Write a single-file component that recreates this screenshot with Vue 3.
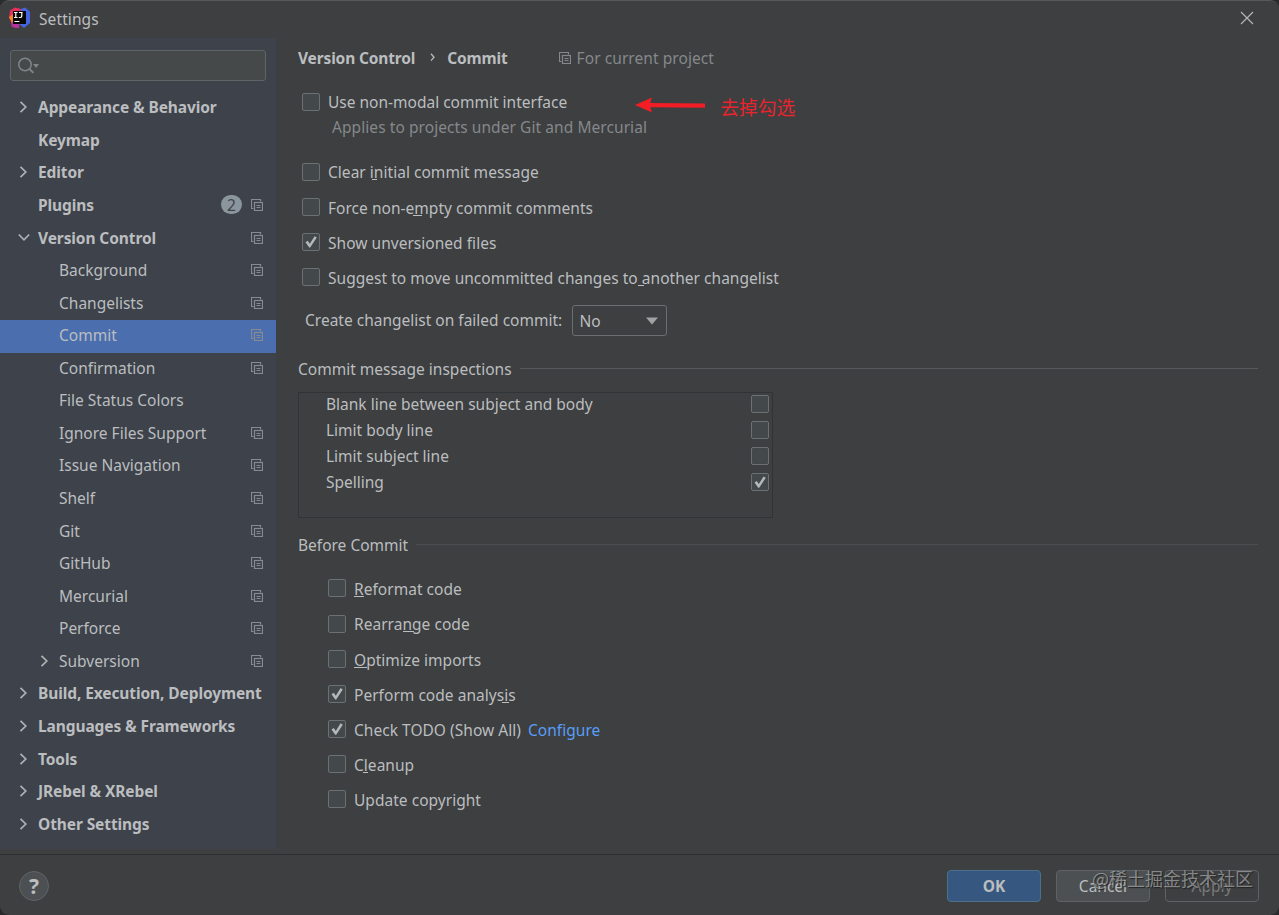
<script setup>
    import { ref } from 'vue';

    const tree = [
        { name: 'Appearance & Behavior', arrow: 'right', bold: true },
        { name: 'Keymap', bold: true },
        { name: 'Editor', arrow: 'right', bold: true },
        { name: 'Plugins', bold: true, badge: 2, project: true },
        { name: 'Version Control', arrow: 'down', bold: true, project: true },
        { name: 'Background', project: true },
        { name: 'Changelists', project: true },
        { name: 'Commit', project: true },
        { name: 'Confirmation', project: true },
        { name: 'File Status Colors' },
        { name: 'Ignore Files Support', project: true },
        { name: 'Issue Navigation', project: true },
        { name: 'Shelf', project: true },
        { name: 'Git', project: true },
        { name: 'GitHub', project: true },
        { name: 'Mercurial', project: true },
        { name: 'Perforce', project: true },
        { name: 'Subversion', arrow: 'right', project: true },
        { name: 'Build, Execution, Deployment', arrow: 'right', bold: true },
        { name: 'Languages & Frameworks', arrow: 'right', bold: true },
        { name: 'Tools', arrow: 'right', bold: true },
        { name: 'JRebel & XRebel', arrow: 'right', bold: true },
        { name: 'Other Settings', arrow: 'right', bold: true },
    ];
    const selected = ref('Commit');

    // mnemonic: [offset from the label start, width] of the underline
    const options = ref([
        { name: 'Clear initial commit message', checked: false, mnemonic: [44, 5] },
        { name: 'Force non-empty commit comments', checked: false, mnemonic: [85, 9] },
        { name: 'Show unversioned files', checked: true },
        { name: 'Suggest to move uncommitted changes to another changelist', checked: false, mnemonic: [310, 6] },
    ]);
    const inspections = ref([
        { name: 'Blank line between subject and body', checked: false },
        { name: 'Limit body line', checked: false },
        { name: 'Limit subject line', checked: false },
        { name: 'Spelling', checked: true },
    ]);
    const beforeCommit = ref([
        { name: 'Reformat code', checked: false, mnemonic: [0, 10] },
        { name: 'Rearrange code', checked: false, mnemonic: [49, 11] },
        { name: 'Optimize imports', checked: false, mnemonic: [0, 13] },
        { name: 'Perform code analysis', checked: true, mnemonic: [148, 7] },
        { name: 'Check TODO (Show All)', checked: true, link: 'Configure' },
        { name: 'Cleanup', checked: false, mnemonic: [9, 5] },
        { name: 'Update copyright', checked: false },
    ]);
    const nonModal = ref(false);

    function underline(mnemonic) {
        return { left: mnemonic[0] + 'px', width: mnemonic[1] + 'px' };
    }
</script>

<template>
    <div class='window'>
        <svg class='symbols' width='0' height='0'>
            <symbol id='project' viewBox='0 0 12 12'>
                <path d='M2.5 9.5H.5V.5h9v2' fill='none' stroke='currentColor' stroke-width='1.2' />
                <rect x='3.5' y='3.5' width='8' height='8' fill='none' stroke='currentColor' stroke-width='1.2' />
                <path d='M5.5 6.5h4M5.5 8.5h4' stroke='currentColor' stroke-width='1.1' />
            </symbol>
        </svg>

        <header class='titlebar'>
            <svg class='logo' width='22' height='22' viewBox='0 0 22 22'>
                <path d='M1 3.5 6 .5 12 2 9 21 3 20 2 14 0 11z' fill='#e8305f' />
                <path d='M0 10 6 6 7 15 3 16z' fill='#f58529' />
                <path d='M2 16 11 11 10 21 3 20z' fill='#b5349b' />
                <path d='M12 2 16 .5 21 4.5V16L15 21 10 17z' fill='#4664e0' />
                <rect x='4' y='4' width='13' height='13' fill='#080808' />
                <path d='M5 5.5h3.6M6.8 5.5v5M5 10.5h3.6M10 5.5h3.6M12.8 5.5v3.6q0 1.4-1.4 1.4H9.8M5.4 14.5h5' fill='none' stroke='#fff' stroke-width='1.2' />
            </svg>
            <span class='title'>Settings</span>
            <svg class='close' width='14' height='14' viewBox='0 0 14 14'>
                <path d='M1 1l12 12M13 1L1 13' stroke='#b4b6b8' stroke-width='1.2' />
            </svg>
        </header>

        <div class='body'>
            <aside class='sidebar'>
                <div class='search'>
                    <svg width='24' height='20' viewBox='0 0 24 20'>
                        <circle cx='8' cy='7.5' r='6.2' fill='none' stroke='#7f8487' stroke-width='1.5' />
                        <path d='M12.4 11.9l4 4' stroke='#7f8487' stroke-width='2' />
                        <path d='M16 7h6l-3 4z' fill='#7f8487' />
                    </svg>
                </div>
                <ul class='tree'>
                    <li
                        v-for='item in tree'
                        :key='item.name'
                        class='tree--item'
                        :class='{ bold: item.bold, child: !item.bold, selected: item.name === selected }'
                        @click='selected = item.name'
                    >
                        <span class='tree--arrow'>
                            <svg v-if='item.arrow' :class='item.arrow' width='12' height='12' viewBox='0 0 12 12'>
                                <path d='M2.5 .8L7.8 6 2.5 11.2' fill='none' stroke='#afb2b5' stroke-width='1.7' />
                            </svg>
                        </span>
                        <span class='tree--name'>{{ item.name }}</span>
                        <span v-if='item.badge' class='tree--badge'>{{ item.badge }}</span>
                        <svg v-if='item.project' class='tree--project' width='12' height='12'><use href='#project' /></svg>
                    </li>
                </ul>
            </aside>

            <main class='content'>
                <div class='breadcrumb'>
                    <b>Version Control</b>
                    <svg class='crumb-arrow' width='6' height='9' viewBox='0 0 6 9'>
                        <path d='M1 .8l3 3.4-3 3.4' fill='none' stroke='#b4b6b8' stroke-width='1.4' />
                    </svg>
                    <b>Commit</b>
                    <svg class='crumb-icon' width='12' height='12'><use href='#project' /></svg>
                    <span class='muted scope'>For current project</span>
                </div>

                <div class='annotated'>
                    <label class='option'>
                        <input v-model='nonModal' type='checkbox' class='checkbox' />
                        <span class='option--name'>Use non-modal commit interface</span>
                    </label>
                    <svg class='arrow' width='70' height='16' viewBox='0 0 70 16'>
                        <path d='M0 8L17 .5 15.3 6 70 6.5v4.2l-54.7-.4L17 15.5z' fill='#f21d25' />
                    </svg>
                    <span class='note'>去掉勾选</span>
                </div>
                <p class='muted hint'>Applies to projects under Git and Mercurial</p>

                <label v-for='option in options' :key='option.name' class='option'>
                    <input v-model='option.checked' type='checkbox' class='checkbox' />
                    <span class='option--name'>
                        {{ option.name }}
                        <i v-if='option.mnemonic' class='mnemonic' :style='underline(option.mnemonic)'></i>
                    </span>
                </label>

                <div class='changelist'>
                    <span>Create changelist on failed commit:</span>
                    <div class='select'>
                        No
                        <svg width='12' height='8' viewBox='0 0 12 8'><path d='M0 .5h12L6 7.5z' fill='#a0a3a5' /></svg>
                    </div>
                </div>

                <h2 class='section'>Commit message inspections</h2>
                <div class='inspections'>
                    <label v-for='inspection in inspections' :key='inspection.name' class='inspection'>
                        {{ inspection.name }}
                        <input v-model='inspection.checked' type='checkbox' class='checkbox' />
                    </label>
                </div>

                <h2 class='section before'>Before Commit</h2>
                <div class='before-list'>
                    <label v-for='option in beforeCommit' :key='option.name' class='option'>
                        <input v-model='option.checked' type='checkbox' class='checkbox' />
                        <span class='option--name'>
                            {{ option.name }}
                            <i v-if='option.mnemonic' class='mnemonic' :style='underline(option.mnemonic)'></i>
                        </span>
                        <a v-if='option.link' class='link'>{{ option.link }}</a>
                    </label>
                </div>
            </main>
        </div>

        <footer class='footer'>
            <button class='help'>?</button>
            <button class='button primary'>OK</button>
            <button class='button'>Cancel</button>
            <button class='button disabled'>Apply</button>
            <span class='watermark'>@稀土掘金技术社区</span>
        </footer>
    </div>
</template>

<style>
    body {
        background: #292b2c;
    }
</style>

<style scoped>
    * {
        box-sizing: border-box;
    }

    .window {
        position: relative;
        display: flex;
        flex-direction: column;
        width: 1279px;
        height: 915px;
        overflow: hidden;
        border-top: 1px solid #55595a;
        border-radius: 9px;
        background: #3d3f41;
        color: #bbbdbf;
        font: 15.5px/20px 'Noto Sans', 'Noto Sans CJK SC', sans-serif;
        white-space: nowrap;
    }

    .symbols {
        position: absolute;
    }

    .titlebar {
        display: flex;
        align-items: center;
        height: 37px;
        padding: 0 25px 3px 9px;
    }

    .title {
        margin: 2px 0 0 8px;
        letter-spacing: 0.1px;
    }

    .close {
        margin-left: auto;
    }

    .body {
        display: flex;
        height: 816px;
    }

    .sidebar {
        width: 276px;
        height: 811px;
        padding-top: 12px;
        background: #3d424b;
    }

    .search {
        width: 256px;
        height: 31px;
        margin-left: 10px;
        padding: 6px;
        border: 1px solid #5f6467;
        border-radius: 3px;
        background: #45494a;
    }

    .tree {
        margin: 11px 0 0;
        padding: 0;
        list-style: none;
    }

    .tree--item {
        display: flex;
        align-items: center;
        height: 32.57px;
        padding: 0 13px 2px 18px;
    }

    .tree--item.child {
        padding-left: 39px;
    }

    .selected {
        background: #4b6eaf;
    }

    .tree--arrow {
        display: flex;
        width: 20px;
    }

    .down {
        transform: rotate(90deg);
    }

    .bold {
        font-weight: 700;
        letter-spacing: -0.1px;
    }

    .tree--badge {
        width: 21px;
        height: 19px;
        margin-left: auto;
        border-radius: 10px;
        background: #8b959d;
        color: #3d424b;
        font-weight: 400;
        line-height: 20px;
        text-align: center;
    }

    .tree--project {
        margin-left: auto;
        color: #858b91;
    }

    .tree--badge + .tree--project {
        margin-left: 9px;
    }

    .content {
        flex: 1;
        padding: 10px 21px 0 22px;
    }

    .breadcrumb {
        display: flex;
        align-items: center;
        height: 20px;
    }

    .breadcrumb b {
        font-weight: 700;
        letter-spacing: -0.15px;
    }

    .crumb-arrow {
        margin: 0 11px 2px 15px;
    }

    .crumb-icon {
        margin-left: 51px;
        color: #85888a;
    }

    .scope {
        margin-left: 6px;
        letter-spacing: 0.07px;
    }

    .muted {
        color: #85888a;
    }

    .annotated {
        display: flex;
        align-items: center;
        margin-top: 16px;
        height: 36px;
    }

    .annotated .option--name {
        margin-top: 0;
        letter-spacing: 0;
    }

    .arrow {
        margin: 6px 15px 0 68px;
    }

    .note {
        margin-top: 10px;
        color: #e8242c;
        font: 18.8px/24px 'Noto Sans CJK SC', sans-serif;
    }

    .hint {
        height: 20px;
        margin: -3px 0 17px 34px;
        letter-spacing: 0.07px;
    }

    .option {
        display: flex;
        align-items: center;
        height: 35.2px;
        padding-left: 4px;
    }

    .option--name {
        position: relative;
        margin: 1.6px 0 0 8px;
        letter-spacing: 0.03px;
    }

    .mnemonic {
        position: absolute;
        top: 17px;
        height: 1px;
        background: #bbbdbf;
    }

    .checkbox {
        width: 18px;
        height: 18px;
        margin: 0;
        border: 1px solid #6b7072;
        border-radius: 2px;
        appearance: none;
        background: #43494a;
    }

    .checkbox:checked::after {
        display: block;
        width: 16px;
        height: 16px;
        background: #b4b8ba;
        clip-path: polygon(2.5px 8.3px, 4.8px 6.8px, 6.8px 9.8px, 11.6px 2.2px, 13.8px 3.6px, 7.2px 13.6px, 6.2px 13.6px);
        content: '';
    }

    .changelist {
        display: flex;
        align-items: center;
        height: 31px;
        margin: 10px 0 0 7px;
    }

    .select {
        display: flex;
        align-items: center;
        justify-content: space-between;
        width: 95px;
        height: 31px;
        margin-left: 9.4px;
        padding: 2px 8px 0 7px;
        border: 1px solid #6b6e70;
        border-radius: 3px;
    }

    .section {
        display: flex;
        align-items: center;
        height: 20px;
        margin: 23px 0 0;
        font-size: inherit;
        font-weight: 400;
    }

    .section::after {
        flex: 1;
        height: 1px;
        margin-left: 8px;
        background: #56595b;
        content: '';
    }

    .inspections {
        width: 475px;
        height: 126px;
        margin-top: 13px;
        border: 1px solid #313436;
    }

    .inspection {
        display: flex;
        align-items: center;
        justify-content: space-between;
        height: 26px;
        padding: 0 3px 2px 27px;
    }

    .inspection:first-child {
        margin-top: -0.5px;
    }

    .before {
        margin-top: 17px;
    }

    .before::after {
        background: #4b4e50;
    }

    .before-list {
        margin: 16px 0 0 26px;
    }

    .link {
        margin: 1.6px 0 0 7px;
        color: #589df6;
        letter-spacing: 0.04px;
    }

    .footer {
        display: flex;
        flex: 1;
        gap: 16px;
        align-items: center;
        padding: 1px 20px 0 19px;
        border-top: 1px solid #2c2e30;
    }

    .help {
        width: 30px;
        height: 30px;
        margin-right: auto;
        padding: 0;
        border: 1px solid #5f6466;
        border-radius: 50%;
        background: #4c5052;
        color: #bbbdbf;
        font: 700 21px/28px 'Noto Sans', sans-serif;
    }

    .button {
        width: 94px;
        height: 32px;
        padding: 1px 0 0;
        border: 1px solid #5e6265;
        border-radius: 4px;
        background: #4c5052;
        color: #bbbdbf;
        font: inherit;
    }

    .primary {
        margin-right: -1px;
        border-color: #4c708c;
        background: #365880;
        font-weight: 700;
    }

    .disabled {
        margin-left: -1px;
        background: transparent;
        color: #777a7c;
    }

    .watermark {
        position: absolute;
        right: 26px;
        bottom: 24px;
        color: rgba(190, 192, 194, 0.6);
        font: 18px/26px 'Noto Sans CJK SC', sans-serif;
        text-shadow: 1px 1px 1px #222;
    }
</style>
